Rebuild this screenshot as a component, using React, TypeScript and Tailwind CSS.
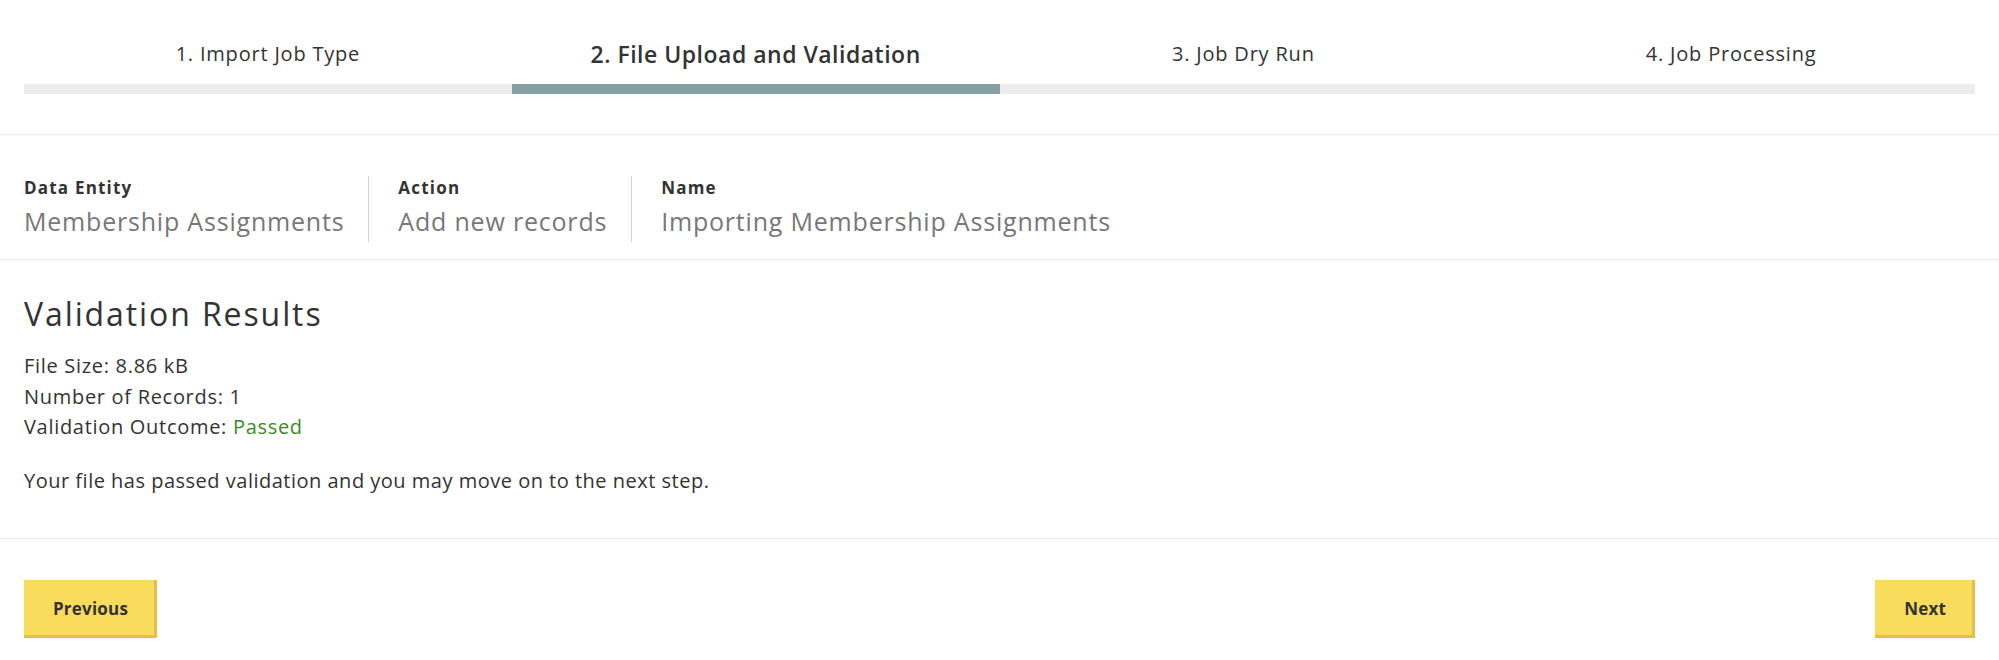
import React from 'react';

const STEPS = ['1. Import Job Type', '2. File Upload and Validation', '3. Job Dry Run', '4. Job Processing'];
const ACTIVE = 1;

const FIELDS = [
  { label: 'Data Entity', value: 'Membership Assignments' },
  { label: 'Action', value: 'Add new records' },
  { label: 'Name', value: 'Importing Membership Assignments' },
];

function Stepper() {
  return (
    <div className="px-6 pt-10 pb-10 border-b border-[#ececec]">
      <div className="grid grid-cols-4">
        {STEPS.map((s, i) => (
          <div key={s} className="flex flex-col">
            <div
              className={
                'h-[28px] leading-[28px] text-center text-[#333] ' +
                (i === ACTIVE ? 'text-[23px] font-semibold tracking-[0.5px]' : 'text-[20px] tracking-[0.8px]')
              }
            >
              {s}
            </div>
            <div className={'mt-4 h-[10px] ' + (i === ACTIVE ? 'bg-[#87a0a6]' : 'bg-[#ececec]')} />
          </div>
        ))}
      </div>
    </div>
  );
}

function Button({ children }: { children: React.ReactNode }) {
  return (
    <button className="h-[58px] px-[29px] bg-[#f9dc5c] shadow-[inset_-3px_-3px_0_#e8bd50] text-[17px] font-bold tracking-[0.2px] text-[#333]">
      {children}
    </button>
  );
}

export default function App() {
  return (
    <div className="w-[1999px] h-[660px] bg-white text-[#333]" style={{ fontFamily: '"Open Sans", sans-serif' }}>
      <Stepper />

      <div className="flex px-6 pt-[41px] pb-[17px] border-b border-[#ececec]">
        {FIELDS.map((f, i) => (
          <div
            key={f.label}
            className={
              'flex flex-col pb-1 ' +
              (i === 0 ? 'pr-6' : 'pl-[29px] pr-6') +
              (i < FIELDS.length - 1 ? ' border-r border-[#d4d4d4]' : '')
            }
          >
            <div className="text-[17px] leading-[24px] font-bold tracking-[1.2px] text-[#333]">{f.label}</div>
            <div className="mt-1 text-[25px] leading-[34px] tracking-[0.8px] text-[#777]">{f.value}</div>
          </div>
        ))}
      </div>

      <div className="px-6 pt-[34px] pb-[42px] border-b border-[#ececec]">
        <h2 className="text-[32px] leading-[40px] tracking-[1.9px] text-[#333]">Validation Results</h2>
        <div className="mt-[17px] text-[20px] leading-[30.5px] tracking-[0.7px]">
          <div>File Size: 8.86 kB</div>
          <div>Number of Records: 1</div>
          <div>
            Validation Outcome: <span className="text-[#3b8a22]">Passed</span>
          </div>
        </div>
        <p className="mt-[23px] text-[20px] leading-[30px] tracking-[0.5px]">
          Your file has passed validation and you may move on to the next step.
        </p>
      </div>

      <div className="flex justify-between px-6 pt-[41px]">
        <Button>Previous</Button>
        <Button>Next</Button>
      </div>
    </div>
  );
}
